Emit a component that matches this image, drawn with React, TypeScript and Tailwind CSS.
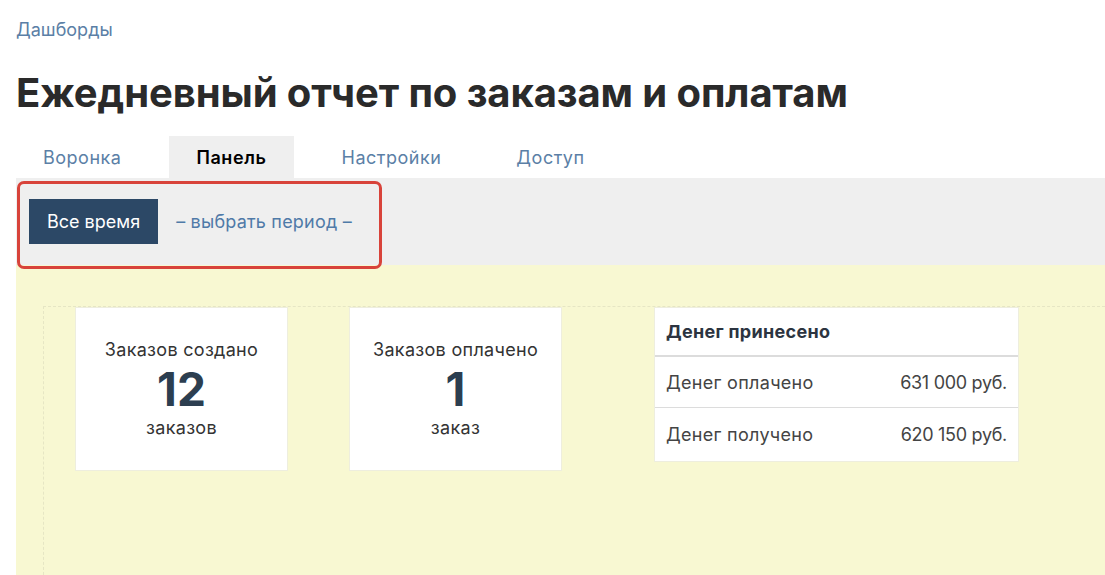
export default function App() {
  const tabs = ["Воронка", "Панель", "Настройки", "Доступ"]

  return (
    <div className="min-h-screen bg-white font-['Inter','Noto_Sans',sans-serif] text-[#333]">
      <div className="pl-4">
        {/* Breadcrumb */}
        <div className="pt-[18px] h-[40px]">
          <a href="#" className="text-[18px] leading-[24px] text-[#5b7fa6]">
            Дашборды
          </a>
        </div>

        {/* Title */}
        <h1 className="mt-[30px] text-[40px] leading-[46px] font-bold tracking-[-0.1px] text-[#2a2a2a]">
          Ежедневный отчет по заказам и оплатам
        </h1>

        {/* Tabs */}
        <div className="mt-[20px] flex gap-[21px]">
          {tabs.map((t) => (
            <div
              key={t}
              className={
                t === "Панель"
                  ? "h-[42px] px-[27px] flex items-center text-[18px] tracking-[0.6px] font-semibold text-black bg-[#efefef]"
                  : "h-[42px] px-[27px] flex items-center text-[18px] tracking-[0.5px] text-[#5b7fa6]"
              }
            >
              {t}
            </div>
          ))}
        </div>

        {/* Period filter */}
        <div className="relative h-[87px] bg-[#efefef] flex items-center gap-[18px] pl-[13px]">
          <button
            type="button"
            className="h-[45px] px-[18px] bg-[#2c4866] text-white text-[18px]"
          >
            Все время
          </button>
          <a href="#" className="text-[18px] tracking-[0.2px] text-[#4f7aa8]">
            – выбрать период –
          </a>
          <div className="absolute left-[1px] top-[3px] w-[365px] h-[88px] rounded-[7px] border-[3px] border-[#d8433a] pointer-events-none" />
        </div>

        {/* Dashboard canvas */}
        <div className="bg-[#f8f8d2] pt-[41px] pl-[27px] h-[320px]">
          <div className="border-t border-l border-dashed border-[#e6e6c4] h-full pl-[31px]">
            <div className="flex items-start">
              <div className="w-[213px] h-[164px] bg-white border border-[#eeeede] flex flex-col items-center justify-center text-center">
                <div className="text-[18px] leading-[22px] tracking-[0.3px] text-[#333]">Заказов создано</div>
                <div className="text-[46px] leading-[56px] font-bold text-[#2c3e50]">12</div>
                <div className="text-[18px] leading-[22px] tracking-[0.3px] text-[#333]">заказов</div>
              </div>
              <div className="ml-[61px] w-[213px] h-[164px] bg-white border border-[#eeeede] flex flex-col items-center justify-center text-center">
                <div className="text-[18px] leading-[22px] tracking-[0.3px] text-[#333]">Заказов оплачено</div>
                <div className="text-[46px] leading-[56px] font-bold text-[#2c3e50]">1</div>
                <div className="text-[18px] leading-[22px] tracking-[0.3px] text-[#333]">заказ</div>
              </div>
              <div className="ml-[92px] w-[365px] bg-white border border-[#eeeede] text-[18px]">
                <div className="h-[49px] flex items-center px-[11px] font-bold tracking-[0.3px] text-[#2c3440] border-b-2 border-[#dcdcdc]">
                  Денег принесено
                </div>
                <div className="h-[51px] flex items-center justify-between px-[11px] border-b border-[#dcdcdc] text-[#444]">
                  <span className="tracking-[0.3px]">Денег оплачено</span>
                  <span className="tracking-[-0.3px]">631 000 руб.</span>
                </div>
                <div className="h-[53px] flex items-center justify-between px-[11px] text-[#444]">
                  <span className="tracking-[0.3px]">Денег получено</span>
                  <span className="tracking-[-0.3px]">620 150 руб.</span>
                </div>
              </div>
            </div>
          </div>
        </div>
      </div>
    </div>
  )
}
